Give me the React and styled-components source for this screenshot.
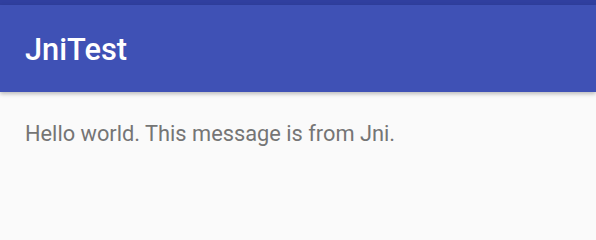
import React from "react";
import styled, { createGlobalStyle } from "styled-components";

const GlobalStyle = createGlobalStyle`
  html, body {
    margin: 0;
    padding: 0;
    background: #fafafa;
  }
  body {
    font-family: Roboto, "Noto Sans", sans-serif;
  }
`;

const Screen = styled.div`
  width: 596px;
  height: 214px;
  background: #fafafa;
  overflow: hidden;
`;

const StatusBar = styled.div`
  height: 5px;
  background: #303f9f;
`;

const Toolbar = styled.header`
  height: 87px;
  background: #3f51b5;
  display: flex;
  align-items: center;
  padding: 2px 25px 0;
  box-sizing: border-box;
  box-shadow: 0 2px 4px rgba(0, 0, 0, 0.25);
  position: relative;
`;

const Title = styled.h1`
  margin: 0;
  color: #fff;
  font-size: 30.8px;
  font-weight: 500;
  letter-spacing: 0;
`;

const Content = styled.main`
  padding: 29px 25px;
`;

const Message = styled.p`
  margin: 0;
  color: #757575;
  font-size: 21.8px;
  line-height: 1.2;
`;

export default function App() {
  return (
    <Screen>
      <GlobalStyle />
      <StatusBar />
      <Toolbar>
        <Title>JniTest</Title>
      </Toolbar>
      <Content>
        <Message>Hello world. This message is from Jni.</Message>
      </Content>
    </Screen>
  );
}
